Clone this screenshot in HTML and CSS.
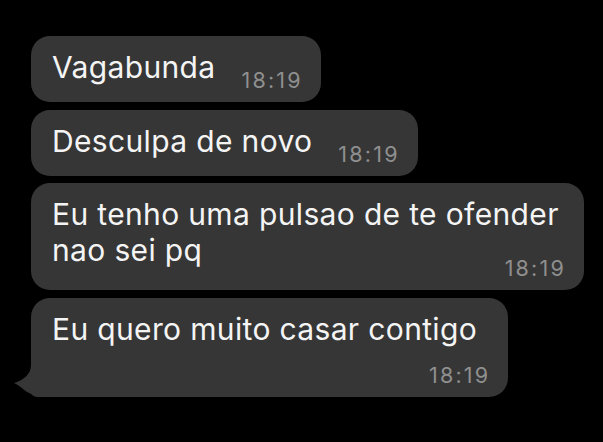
FILE: index.html
```html
<!DOCTYPE html>
<html lang="pt">
<head>
<meta charset="utf-8">
<link rel="stylesheet" href="styles.css">
</head>
<body>
<div class="chat">
  <div class="bubble inline">
    <span class="text">Vagabunda</span>
    <span class="time">18:19</span>
  </div>
  <div class="bubble inline">
    <span class="text">Desculpa de novo</span>
    <span class="time">18:19</span>
  </div>
  <div class="bubble stack wrap">
    <span class="text">Eu tenho uma pulsao de te ofender<br>nao sei pq</span>
    <span class="time">18:19</span>
  </div>
  <div class="bubble stack below tailed">
    <span class="text">Eu quero muito casar contigo</span>
    <span class="time">18:19</span>
    <svg class="tail" width="36" height="32" viewBox="0 0 36 32"><path d="M17 0 C17 9 10 15 0 18 C8 21 14 32 30 32 L36 32 L36 0 Z"/></svg>
  </div>
</div>
</body>
</html>
```
FILE: styles.css
```css
html, body {
  margin: 0;
  background: #000;
}
body {
  padding: 36px 0 0 31px;
  font-family: "Inter", "Liberation Sans", sans-serif;
}
.chat {
  display: flex;
  flex-direction: column;
  align-items: flex-start;
  gap: 7.7px;
}
.bubble {
  position: relative;
  background: #363636;
  border-radius: 19px;
  padding: 13px 20px 11px 21px;
  display: flex;
}
.text {
  color: #f4f4f4;
  font-size: 30px;
  line-height: 36px;
  letter-spacing: 0.35px;
}
.time {
  color: #8f8f8f;
  font-size: 21.5px;
  line-height: 21px;
  letter-spacing: 2.2px;
  margin-right: -2.2px;
}
.inline {
  flex-direction: row;
  align-items: flex-end;
}
.inline .text {
  margin-bottom: 6px;
}
.inline .time {
  margin-left: 26px;
}
.stack {
  flex-direction: column;
}
.stack .time {
  align-self: flex-end;
}
.wrap .text {
  margin-right: 5px;
}
.wrap .time {
  margin-top: -10px;
}
.below .text {
  margin-right: 11px;
}
.below .time {
  margin-top: 18px;
}
.tailed {
  border-bottom-left-radius: 6px;
}
.tail {
  position: absolute;
  left: -17px;
  bottom: 0;
  fill: #363636;
}
```
